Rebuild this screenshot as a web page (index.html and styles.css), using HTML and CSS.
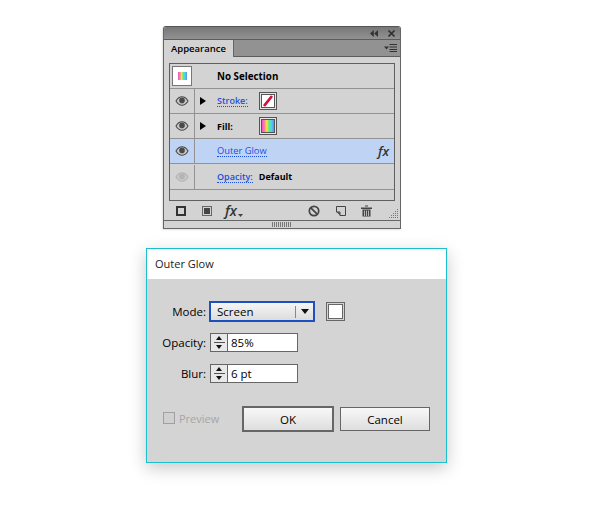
FILE: index.html
```html
<!DOCTYPE html>
<html lang="en">
<head>
<meta charset="utf-8">
<title>Outer Glow</title>
<link rel="stylesheet" href="styles.css">
</head>
<body>
<svg class="defs" width="0" height="0" aria-hidden="true">
  <defs>
    <linearGradient id="rainbow" x1="0" y1="0" x2="1" y2="0">
      <stop offset="0" stop-color="#f850d0"/><stop offset=".22" stop-color="#f88898"/><stop offset=".4" stop-color="#f8e840"/><stop offset=".58" stop-color="#60e888"/><stop offset=".78" stop-color="#40d8f8"/><stop offset="1" stop-color="#6888f0"/>
    </linearGradient>
    <symbol id="eye" viewBox="0 0 14 10">
      <path d="M1 5C3 1.500 5 .8 7 .8S11 1.500 13 5C11 8.500 9 9.200 7 9.200S3 8.500 1 5Z" fill="#c8c8c8" stroke="currentColor" stroke-width="1.100"/>
      <circle cx="7" cy="4.400" r="2.800" fill="currentColor"/>
    </symbol>
  </defs>
</svg>

<section class="panel">
  <div class="titlebar">
    <svg class="tb-icon" width="8" height="7" viewBox="0 0 8 7"><path d="M3.800 0v7L0 3.500ZM8 0v7L4.200 3.500Z" fill="#333"/></svg>
    <svg class="tb-icon" width="7" height="7" viewBox="0 0 7 7"><path d="M.5 .5l6 6M6.500 .5l-6 6" stroke="#333" stroke-width="1.600"/></svg>
  </div>
  <div class="tabbar">
    <div class="tab">Appearance</div>
    <svg class="menu-icon" width="13" height="8" viewBox="0 0 13 8"><path d="M0 2.500h5L2.500 5.500Z" fill="#333"/><path d="M5.500.5H13M5.500 3H13M5.500 5.500H13M5.500 7.500H13" stroke="#333"/></svg>
  </div>
  <div class="list">
    <div class="row row-head">
      <div class="thumb"><svg width="9" height="8" viewBox="0 0 9 8"><rect width="9" height="8" fill="url(#rainbow)"/></svg></div>
      <span class="strong">No Selection</span>
    </div>
    <div class="row">
      <div class="eye-cell"><svg class="eye" width="14" height="10"><use href="#eye"/></svg></div>
      <div class="arrow-cell"><span class="arrow"></span></div>
      <a class="link label-w">Stroke:</a>
      <div class="swatch"><svg width="12" height="12" viewBox="0 0 12 12"><rect width="12" height="12" fill="#fff"/><path d="M2 11L10 1" stroke="#d0103a" stroke-width="2.800"/></svg></div>
    </div>
    <div class="row">
      <div class="eye-cell"><svg class="eye" width="14" height="10"><use href="#eye"/></svg></div>
      <div class="arrow-cell"><span class="arrow"></span></div>
      <span class="strong label-w">Fill:</span>
      <div class="swatch"><svg width="12" height="12" viewBox="0 0 12 12"><rect width="12" height="12" fill="url(#rainbow)"/></svg></div>
    </div>
    <div class="row row-selected">
      <div class="eye-cell"><svg class="eye" width="14" height="10"><use href="#eye"/></svg></div>
      <div class="arrow-cell"></div>
      <a class="link">Outer Glow</a>
      <span class="fx fx-row">fx</span>
    </div>
    <div class="row row-last">
      <div class="eye-cell eye-off"><svg class="eye" width="14" height="10"><use href="#eye"/></svg></div>
      <div class="arrow-cell"></div>
      <a class="link">Opacity:</a>
      <span class="strong value">Default</span>
    </div>
    <div class="list-tail"></div>
  </div>
  <div class="toolbar">
    <svg width="10" height="10" viewBox="0 0 10 10"><rect x="1" y="1" width="8" height="8" fill="none" stroke="#333" stroke-width="2"/></svg>
    <svg class="tool-fill" width="10" height="10" viewBox="0 0 10 10"><rect x=".5" y=".5" width="9" height="9" fill="#d2d2d2" stroke="#666"/><rect x="2" y="2" width="6" height="6" fill="#444"/></svg>
    <span class="fx fx-tool">fx<svg width="5" height="3" viewBox="0 0 5 3"><path d="M0 0h5L2.500 3Z" fill="#444"/></svg></span>
    <span class="spacer"></span>
    <svg width="12" height="12" viewBox="0 0 12 12"><circle cx="6" cy="6" r="4.700" fill="none" stroke="#444" stroke-width="1.700"/><path d="M2.800 2.800l6.400 6.400" stroke="#444" stroke-width="1.700"/></svg>
    <svg class="tool-new" width="10" height="10" viewBox="0 0 10 10"><path d="M.5 .5H9.500V9.500H4V6H.5Z" fill="#d2d2d2" stroke="#444"/><path d="M.5 6H4V9.500Z" fill="#555"/></svg>
    <svg class="tool-trash" width="11" height="12" viewBox="0 0 11 12"><path d="M4 1.500V.5H7V1.500M0 2.500H11V4H0ZM1.500 4.500H9.500V11.500H1.500Z" fill="#444"/><path d="M3.500 5.500V11M5.500 5.500V11M7.500 5.500V11" stroke="#d2d2d2" stroke-width=".8"/></svg>
    <svg class="grip" width="11" height="11" viewBox="0 0 11 11"><path d="M9 1h1v1H9zM7 3h1v1H7zM9 3h1v1H9zM5 5h1v1H5zM7 5h1v1H7zM9 5h1v1H9zM3 7h1v1H3zM5 7h1v1H5zM7 7h1v1H7zM9 7h1v1H9zM1 9h1v1H1zM3 9h1v1H3zM5 9h1v1H5zM7 9h1v1H7zM9 9h1v1H9z" fill="#777"/></svg>
  </div>
  <div class="handle"><span class="handle-ticks"></span></div>
</section>

<section class="dialog">
  <header class="dialog-title">Outer Glow</header>
  <div class="dialog-body">
    <div class="field field-mode">
      <label class="field-label">Mode:</label>
      <div class="select">
        <span class="select-value">Screen</span>
        <span class="select-arrow"><span class="tri"></span></span>
      </div>
      <div class="color-box"><span></span></div>
    </div>
    <div class="field field-opacity">
      <label class="field-label">Opacity:</label>
      <div class="number">
        <div class="spin"><span class="up"></span><i></i><span class="down"></span></div>
        <div class="number-value">85%</div>
      </div>
    </div>
    <div class="field field-blur">
      <label class="field-label">Blur:</label>
      <div class="number">
        <div class="spin"><span class="up"></span><i></i><span class="down"></span></div>
        <div class="number-value">6 pt</div>
      </div>
    </div>
    <div class="actions">
      <label class="preview"><span class="check"></span>Preview</label>
      <button class="btn btn-default">OK</button>
      <button class="btn btn-cancel">Cancel</button>
    </div>
  </div>
</section>
</body>
</html>
```
FILE: styles.css
```css
* { box-sizing: border-box; }
html, body { margin: 0; padding: 0; background: #fff; }
body { width: 600px; height: 515px; overflow: hidden; font-family: "Open Sans", "Liberation Sans", sans-serif; color: #000; padding-top: 26px; }
.defs { position: absolute; }

.panel { width: 238px; height: 203px; margin-left: 163px; background: #d3d3d3; border: 1px solid #666; border-top-color: #555; border-radius: 3px 3px 0 0; box-shadow: -1px 1px 2px rgba(0,0,0,.12); display: flex; flex-direction: column; }
.titlebar { height: 12px; background: linear-gradient(#777, #929292); display: flex; justify-content: flex-end; align-items: center; gap: 10px; padding-right: 5px; border-radius: 2px 2px 0 0; flex: none; }
.tabbar { height: 18px; flex: none; background: #929292; border-top: 1px solid #5c5c5c; border-bottom: 1px solid #5c5c5c; display: flex; justify-content: space-between; align-items: center; padding-right: 3px; }
.tab { width: 70px; height: 17px; background: #d3d3d3; border-right: 1px solid #666; font-size: 9.500px; font-weight: 600; line-height: 17px; padding-left: 7px; align-self: flex-start; color: #000; }
.list { width: 226px; height: 138px; margin: 6px 0 0 5px; border: 1px solid #5f5f5f; flex: none; display: flex; flex-direction: column; }
.row { height: 25px; flex: none; display: flex; align-items: center; border-bottom: 1px solid #929292; font-size: 9px; font-weight: 600; }
.row-last { height: 26px; }
.thumb { width: 20px; height: 20px; margin-left: 2px; background: #fff; border: 1px solid #777; display: flex; align-items: center; justify-content: center; margin-right: 25px; }
.strong { font-weight: 700; color: #000; font-size: 9px; }
.row-head .strong { font-size: 9.800px; }
.eye-cell { width: 25px; height: 24px; border-right: 1px solid #929292; display: flex; align-items: center; justify-content: center; color: #4a4a4a; flex: none; }
.eye-off { color: #b4b4b4; }
.arrow-cell { width: 22px; height: 24px; flex: none; display: flex; align-items: center; padding-left: 5px; }
.arrow { width: 0; height: 0; border-left: 6px solid #000; border-top: 4.500px solid transparent; border-bottom: 4.500px solid transparent; }
.link { color: #1a4fe0; border-bottom: 1px dotted #1a4fe0; line-height: 11px; font-weight: 600; }
.label-w { width: 42px; flex: none; }
a.label-w { width: 31px; margin-right: 11px; }
.swatch { width: 18px; height: 18px; border: 1px solid #555; background: #e4e4e4; padding: 1px; display: flex; }
.swatch svg { width: 14px; height: 14px; border: 1px solid #555; background: #fff; }
.row-selected { background: #bfd4f4; }
.row-selected .link { font-weight: 500; font-size: 9.300px; }
.fx { font-family: "Open Sans", sans-serif; font-style: italic; color: #333; }
.fx-row { margin-left: auto; margin-right: 5px; font-size: 13px; font-weight: 600; }
.value { margin-left: 6px; }
.list-tail { flex: 1; }

.toolbar { height: 19px; flex: none; display: flex; align-items: center; padding: 0 0 0 12px; position: relative; }
.tool-fill { margin-left: 16px; }
.fx-tool { margin-left: 13px; font-size: 14px; font-weight: 600; line-height: 16px; display: flex; align-items: flex-end; gap: 1px; }
.fx-tool svg { margin-bottom: 2px; }
.spacer { flex: 1; }
.tool-new { margin-left: 16px; }
.tool-trash { margin-left: 15px; margin-right: 28px; }
.grip { position: absolute; right: 1px; bottom: 1px; }
.handle { flex: 1; border-top: 1px solid #666; display: flex; justify-content: center; align-items: center; }
.handle-ticks { width: 20px; height: 5px; background: repeating-linear-gradient(90deg, #777 0 1px, transparent 1px 2px); }

.dialog { width: 301px; height: 215px; margin: 19px 0 0 146px; background: #d4d4d4; border: 1px solid #1cc0cc; box-shadow: 0 5px 16px rgba(0,0,0,.22); display: flex; flex-direction: column; }
.dialog-title { height: 30px; background: #fff; font-size: 11px; line-height: 30px; padding-left: 8px; color: #222; flex: none; }
.dialog-body { flex: 1; padding-top: 22px; }
.field { display: flex; align-items: center; font-size: 11.500px; }
.field-mode { height: 21px; }
.field-opacity { height: 19px; margin-top: 11px; }
.field-blur { height: 19px; margin-top: 12px; }
.field-label { width: 59px; text-align: right; margin-right: 4px; flex: none; }
.field-mode .field-label { margin-right: 3px; }
.select { width: 106px; height: 21px; border: 2px solid #1d4fc0; background: linear-gradient(#f6f6f6, #dcdcdc); display: flex; align-items: center; justify-content: space-between; }
.select-value { padding-left: 6px; }
.select-arrow { width: 18px; height: 12px; border-left: 1px solid #888; display: flex; align-items: center; justify-content: center; }
.tri { width: 0; height: 0; border-top: 5px solid #111; border-left: 4px solid transparent; border-right: 4px solid transparent; }
.color-box { width: 19px; height: 19px; margin-left: 11px; border: 1px solid #666; padding: 1px; display: flex; background: #d4d4d4; }
.color-box span { flex: 1; background: #fff; border: 1px solid #666; }
.number { width: 88px; height: 19px; display: flex; border: 1px solid #666; background: #fff; }
.spin { width: 17px; flex: none; background: #e8e8e8; border-right: 1px solid #666; display: flex; flex-direction: column; align-items: center; justify-content: center; gap: 2px; }
.spin i { width: 11px; height: 1px; background: #555; flex: none; }
.spin .up { border-bottom: 4px solid #111; border-left: 3.500px solid transparent; border-right: 3.500px solid transparent; }
.spin .down { border-top: 4px solid #111; border-left: 3.500px solid transparent; border-right: 3.500px solid transparent; }
.number-value { padding-left: 3px; line-height: 17px; }
.actions { display: flex; align-items: center; margin-top: 23px; height: 26px; }
.preview { display: flex; align-items: center; width: 79px; margin: -2px 0 0 16px; font-size: 11px; color: #a6a6a6; }
.check { width: 12px; height: 12px; border: 1px solid #a0a0a0; margin-right: 4px; background: #d0d0d0; }
.btn { font: inherit; font-size: 11.500px; background: linear-gradient(#f8f8f8, #dedede); color: #000; padding: 0; }
.btn-default { width: 92px; height: 26px; border: 2px solid #666; }
.btn-cancel { width: 90px; height: 24px; border: 1px solid #666; margin-left: 6px; }
```
